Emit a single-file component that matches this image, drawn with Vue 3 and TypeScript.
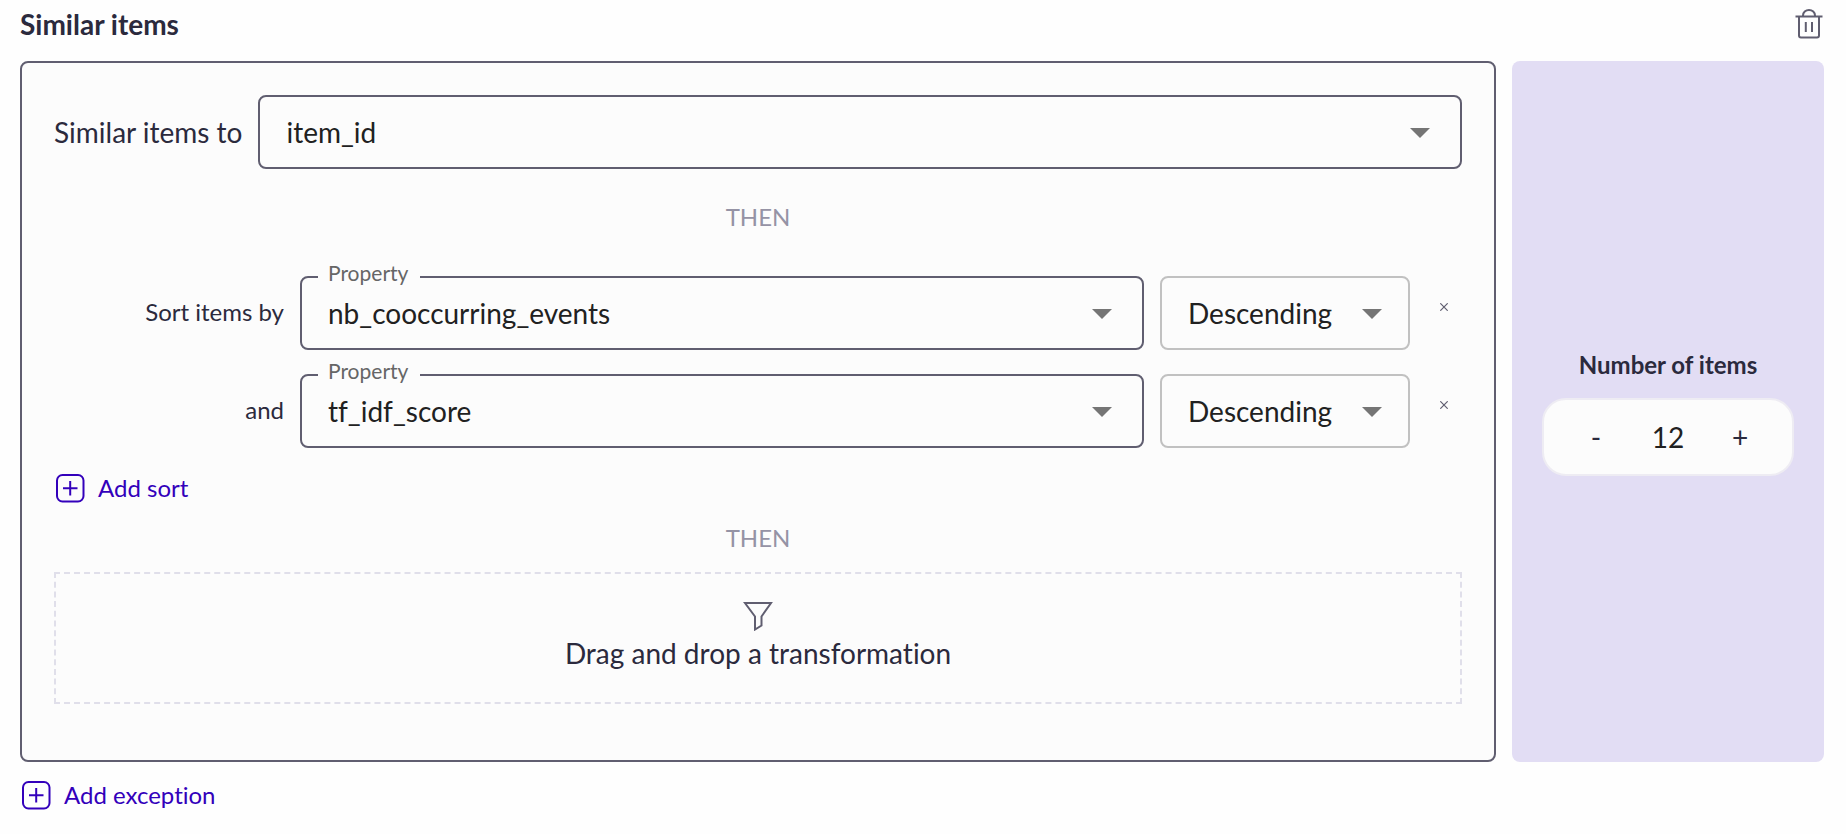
<script setup lang="ts">
import { ref } from 'vue'

interface SortRule {
  id: number
  label: string
  property: string
  order: string
}

const properties = ['nb_cooccurring_events', 'tf_idf_score']
const orders = ['Descending', 'Ascending']

const source = ref('item_id')
const count = ref(12)
const sorts = ref<SortRule[]>([
  { id: 1, label: 'Sort items by', property: 'nb_cooccurring_events', order: 'Descending' },
  { id: 2, label: 'and', property: 'tf_idf_score', order: 'Descending' },
])

function addSort(): void {
  sorts.value.push({ id: Date.now(), label: 'and', property: properties[0], order: orders[0] })
}

function removeSort(id: number): void {
  sorts.value = sorts.value.filter((rule) => rule.id !== id)
}
</script>

<template>
  <section class="block">
    <header class="head">
      <h1 class="title">Similar items</h1>
      <button class="icon-button" type="button" aria-label="Delete block">
        <svg width="28" height="34" viewBox="0 0 28 34" fill="none" stroke="currentColor" stroke-width="2">
          <path d="M0.500 9.500H27.500M8 9.500V8.500a6 5.500 0 0 1 12 0v1M4 9.500v19a2 2 0 0 0 2 2h16a2 2 0 0 0 2-2V9.500M10.800 15v10M17 15v10" />
        </svg>
      </button>
    </header>

    <div class="columns">
      <div class="panel">
        <div class="source">
          <label class="source-label" for="source">Similar items to</label>
          <div class="field">
            <select id="source" v-model="source">
              <option>item_id</option>
            </select>
          </div>
        </div>

        <p class="then">THEN</p>

        <div class="sorts">
          <div v-for="rule in sorts" :key="rule.id" class="sort">
            <span class="sort-label">{{ rule.label }}</span>
            <div class="field">
              <label class="notch" :for="`property-${rule.id}`">Property</label>
              <select :id="`property-${rule.id}`" v-model="rule.property">
                <option v-for="name in properties" :key="name">{{ name }}</option>
              </select>
            </div>
            <div class="field light">
              <select v-model="rule.order" aria-label="Sort order">
                <option v-for="name in orders" :key="name">{{ name }}</option>
              </select>
            </div>
            <button class="remove" type="button" aria-label="Remove sort" @click="removeSort(rule.id)">
              <svg width="8" height="8" viewBox="0 0 8 8" fill="none" stroke="currentColor" stroke-width="1.200">
                <path d="M0.300 0.300l7.400 7.400M7.700 0.300l-7.400 7.400" />
              </svg>
            </button>
          </div>
        </div>

        <button class="add" type="button" @click="addSort">
          <svg width="32" height="32" viewBox="0 0 32 32" fill="none" stroke="currentColor" stroke-width="2">
            <rect x="3" y="3" width="26.500" height="26.500" rx="5.500" />
            <path d="M9 16.200h14.500M16.200 9v14.500" />
          </svg>
          Add sort
        </button>

        <p class="then second">THEN</p>

        <div class="drop">
          <svg width="30" height="30" viewBox="0 0 30 30" fill="none" stroke="currentColor" stroke-width="2">
            <path d="M2 2H28L18.500 15.500V24.500L12 28.500V15.500Z" />
          </svg>
          <span>Drag and drop a transformation</span>
        </div>
      </div>

      <aside class="side">
        <label class="side-label" for="count">Number of items</label>
        <div class="stepper">
          <button type="button" aria-label="Fewer items" @click="count--">-</button>
          <input id="count" v-model="count" type="text" inputmode="numeric" />
          <button type="button" aria-label="More items" @click="count++">+</button>
        </div>
      </aside>
    </div>

    <button class="add outer" type="button">
      <svg width="32" height="32" viewBox="0 0 32 32" fill="none" stroke="currentColor" stroke-width="2">
        <rect x="3" y="3" width="26.500" height="26.500" rx="5.500" />
        <path d="M9 16.200h14.500M16.200 9v14.500" />
      </svg>
      Add exception
    </button>
  </section>
</template>

<style>
body {
  background: #fefefe;
}
</style>

<style scoped>
.block {
  padding: 7px 22px 0 20px;
  color: #2b2a3d;
  font-family: Lato, 'Liberation Sans', sans-serif;
  font-size: 28px;
  font-variant-ligatures: none;
  line-height: 34px;
}

button,
select,
input {
  margin: 0;
  padding: 0;
  border: 0;
  background: none;
  color: inherit;
  font: inherit;
  font-variant-ligatures: none;
}

button,
select {
  cursor: pointer;
}

svg {
  display: block;
  flex: none;
}

.head {
  display: flex;
  justify-content: space-between;
  align-items: flex-start;
  height: 54px;
}

.title {
  margin: 0;
  font-size: 28px;
  font-weight: 700;
}

.icon-button {
  margin-right: 1px;
  color: #605e70;
}

.columns {
  display: grid;
  grid-template-columns: 1fr 312px;
  gap: 16px;
}

.panel {
  display: flex;
  flex-direction: column;
  padding: 32px 32px 56px;
  border: 2px solid #605e70;
  border-radius: 8px;
  background: #fcfcfc;
}

.source {
  display: flex;
  align-items: center;
  gap: 16px;
}

.field {
  position: relative;
  flex: 1;
}

.field select {
  display: block;
  box-sizing: border-box;
  width: 100%;
  height: 74px;
  padding: 0 72px 0 26px;
  border: 2px solid #605e70;
  border-radius: 8px;
  appearance: none;
  color: #212121;
}

.field.light select {
  border-color: #c1c1c1;
}

.field::after {
  content: '';
  position: absolute;
  top: 33px;
  right: 32px;
  border: 10px solid transparent;
  border-top-color: #757575;
  border-bottom: 0;
  pointer-events: none;
}

.field.light::after {
  right: 28px;
}

.notch {
  position: absolute;
  top: -16px;
  left: 18px;
  padding: 0 12px 0 10px;
  background: #fcfcfc;
  color: #666666;
  font-size: 21px;
  line-height: 26px;
}

.then {
  margin: 32px 0 43px;
  color: #9593a5;
  font-size: 24px;
  line-height: 32px;
  text-align: center;
}

.then.second {
  margin: 18px 0;
}

.sorts {
  display: grid;
  gap: 24px;
}

.sort {
  display: grid;
  grid-template-columns: 230px 1fr 250px 36px;
  align-items: center;
  gap: 16px;
}

.sort-label {
  padding-bottom: 2px;
  font-size: 24px;
  text-align: right;
}

.remove {
  display: flex;
  justify-content: center;
  padding: 8px 0 20px;
  color: #605e70;
}

.add {
  display: flex;
  align-items: center;
  align-self: flex-start;
  gap: 12px;
  margin-top: 24px;
  color: #3300bb;
  font-size: 24px;
  line-height: 32px;
}

.add.outer {
  margin-top: 17px;
}

.drop {
  display: flex;
  flex-direction: column;
  align-items: center;
  gap: 5px;
  padding: 27px 0 32px;
  border: 2px dashed #e0dfea;
}

.drop svg {
  color: #605e70;
}

.side {
  display: flex;
  flex-direction: column;
  align-items: center;
  justify-content: center;
  gap: 16px;
  border-radius: 8px;
  background: #e2ddf4;
}

.side-label {
  font-size: 24px;
  font-weight: 700;
}

.stepper {
  display: grid;
  grid-template-columns: 72px 72px 72px;
  justify-content: center;
  box-sizing: border-box;
  width: 252px;
  height: 78px;
  border: 2px solid #eeecf3;
  border-radius: 24px;
  background: #fcfcfc;
}

.stepper input {
  width: 100%;
  color: #212121;
  text-align: center;
}
</style>
